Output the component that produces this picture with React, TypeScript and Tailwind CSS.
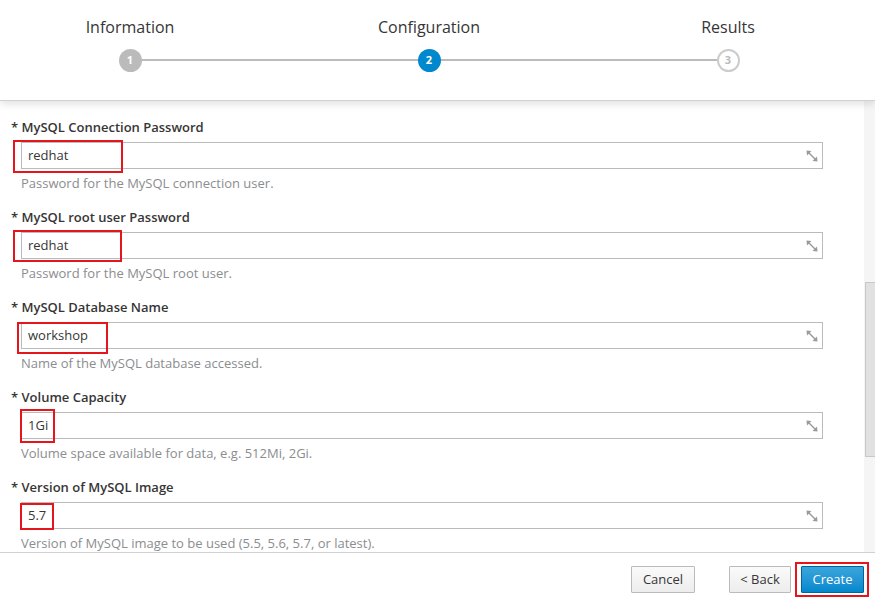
import React from "react";

type Field = {
  label: string;
  value: string;
  help: string;
  box: { left: number; top: number; width: number; height: number };
};

const fields: Field[] = [
  { label: "MySQL Connection Password", value: "redhat", help: "Password for the MySQL connection user.", box: { left: -8, top: -2, width: 110, height: 33 } },
  { label: "MySQL root user Password", value: "redhat", help: "Password for the MySQL root user.", box: { left: -8, top: -2, width: 109, height: 32 } },
  { label: "MySQL Database Name", value: "workshop", help: "Name of the MySQL database accessed.", box: { left: -4, top: 0, width: 91, height: 32 } },
  { label: "Volume Capacity", value: "1Gi", help: "Volume space available for data, e.g. 512Mi, 2Gi.", box: { left: -1, top: -3, width: 35, height: 34 } },
  { label: "Version of MySQL Image", value: "5.7", help: "Version of MySQL image to be used (5.5, 5.6, 5.7, or latest).", box: { left: -1, top: 1, width: 34, height: 27 } },
];

function ResizeIcon() {
  return (
    <svg width="12" height="12" viewBox="0 0 12 12" className="absolute right-[4px] top-[7px]">
      <path d="M2.5 2.5 L9.5 9.5" stroke="#9a9a9a" strokeWidth="1.4" />
      <path d="M0.5 0.5 L5.5 1 L1 5.5 Z" fill="#9a9a9a" />
      <path d="M11.5 11.5 L6.5 11 L11 6.5 Z" fill="#9a9a9a" />
    </svg>
  );
}

export default function App() {
  return (
    <div
      className="w-[875px] h-[608px] bg-white flex flex-col overflow-hidden text-[#363636]"
      style={{ fontFamily: '"Open Sans", "Noto Sans", sans-serif' }}
    >
      {/* Header / wizard steps */}
      <div className="h-[101px] shrink-0 border-b border-[#d1d1d1] shadow-[0_3px_8px_rgba(0,0,0,0.12)] relative z-10 bg-white">
        <div className="relative pl-[70px] w-[788px] pt-[15px] flex justify-between">
          <div className="absolute left-[130px] w-[598px] top-[59px] h-[2px] bg-[#bbbbbb]" />
          <div className="w-[120px] flex flex-col items-center">
            <div className="text-[16px] leading-[24px] text-[#363636]">Information</div>
            <div className="mt-[10px] w-[23px] h-[23px] rounded-full bg-[#bbbbbb] text-white text-[11px] font-bold flex items-center justify-center relative">1</div>
          </div>
          <div className="w-[120px] flex flex-col items-center">
            <div className="text-[16px] leading-[24px] text-[#363636]">Configuration</div>
            <div className="mt-[10px] w-[23px] h-[23px] rounded-full bg-[#0088ce] text-white text-[11px] font-bold flex items-center justify-center relative">2</div>
          </div>
          <div className="w-[120px] flex flex-col items-center">
            <div className="text-[16px] leading-[24px] text-[#363636]">Results</div>
            <div className="mt-[10px] w-[23px] h-[23px] rounded-full bg-white border-2 border-[#cccccc] text-[#bbbbbb] text-[11px] font-bold flex items-center justify-center relative">3</div>
          </div>
        </div>
      </div>

      {/* Body */}
      <div className="flex flex-1 min-h-0">
        <div className="flex-1 overflow-hidden pl-[11px] pt-[17px] pr-[41px]">
          {fields.map((f, i) => (
            <div key={i} className="mb-[16px]">
              <div className="text-[13px] leading-[18px] font-semibold text-[#363636]">* {f.label}</div>
              <div className="relative ml-[10px] mt-[6px] h-[27px] border border-[#bbbbbb] bg-white flex items-center pl-[6px] text-[13px]">
                <span>{f.value}</span>
                <ResizeIcon />
                <div
                  className="absolute border-2 border-[#e5161b] pointer-events-none"
                  style={{ left: f.box.left - 1, top: f.box.top - 1, width: f.box.width, height: f.box.height }}
                />
              </div>
              <div className="ml-[10px] mt-[5px] text-[13px] leading-[18px] text-[#8b8d8f]">{f.help}</div>
            </div>
          ))}
        </div>
        <div className="w-[11px] shrink-0 bg-[#f5f5f5] pt-[181px]">
          <div className="h-[175px] bg-[#e1e1e1] border-l border-t border-b border-[#c8c8c8] ml-[1px]" />
        </div>
      </div>

      {/* Footer */}
      <div className="h-[56px] shrink-0 border-t border-[#d1d1d1] flex items-center justify-end pr-[11px] pb-[2px] text-[13px]">
        <button className="h-[27px] w-[64px] border border-[#bbbbbb] rounded-[1px] bg-gradient-to-b from-[#fafafa] to-[#ededed] text-[#363636]">Cancel</button>
        <button className="ml-[34px] h-[27px] w-[62px] border border-[#bbbbbb] rounded-[1px] bg-gradient-to-b from-[#fafafa] to-[#ededed] text-[#363636]">&lt; Back</button>
        <div className="relative ml-[10px]">
          <button className="h-[27px] w-[63px] border border-[#00659c] rounded-[1px] bg-gradient-to-b from-[#39a5dc] to-[#0088ce] text-white">Create</button>
          <div className="absolute left-[-6px] top-[-4px] w-[74px] h-[35px] border-2 border-[#e5161b] pointer-events-none" />
        </div>
      </div>
    </div>
  );
}
